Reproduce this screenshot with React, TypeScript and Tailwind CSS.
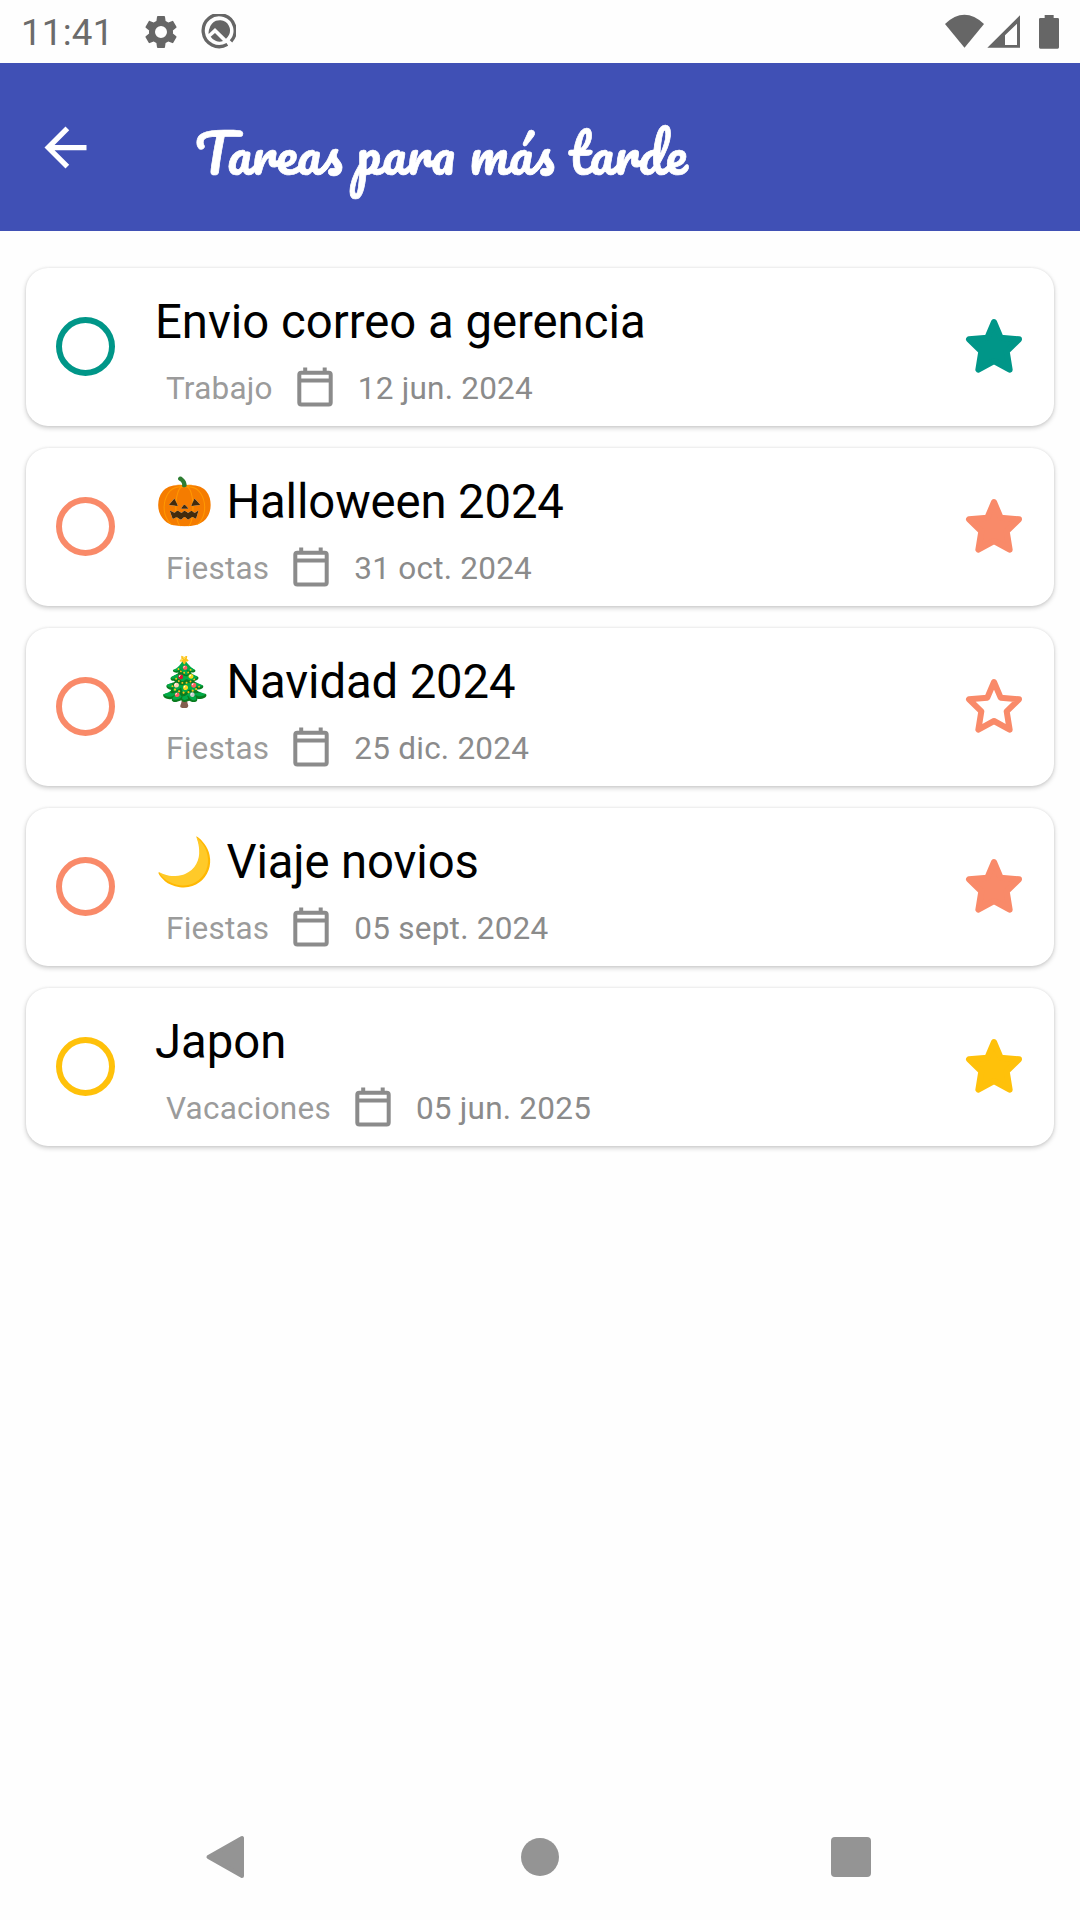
import React from "react";

type Task = {
  emoji?: string;
  title: string;
  category: string;
  date: string;
  starred: boolean;
  ring: string;
  star: string;
};

const tasks: Task[] = [
  { title: "Envio correo a gerencia", category: "Trabajo", date: "12 jun. 2024", starred: true, ring: "border-[#009688]", star: "text-[#009688]" },
  { emoji: "🎃", title: "Halloween 2024", category: "Fiestas", date: "31 oct. 2024", starred: true, ring: "border-[#f98a69]", star: "text-[#f98a69]" },
  { emoji: "🎄", title: "Navidad 2024", category: "Fiestas", date: "25 dic. 2024", starred: false, ring: "border-[#f98a69]", star: "text-[#f98a69]" },
  { emoji: "🌙", title: "Viaje novios", category: "Fiestas", date: "05 sept. 2024", starred: true, ring: "border-[#f98a69]", star: "text-[#f98a69]" },
  { title: "Japon", category: "Vacaciones", date: "05 jun. 2025", starred: true, ring: "border-[#ffc10a]", star: "text-[#ffc10a]" },
];

function StarIcon({ filled }: { filled: boolean }) {
  return (
    <svg viewBox="190 198 186 180" className="h-[60px] w-[62px]" fill={filled ? "currentColor" : "none"} stroke="currentColor" strokeWidth="18" strokeLinejoin="round">
      <path d="M283 216L303 263L358 268L321 304L330 359L283 333L236 359L245 304L208 268L263 263Z" />
    </svg>
  );
}

function CalendarIcon() {
  return (
    <svg viewBox="0 0 36 40" className="mb-[3px] h-10 w-9 shrink-0" fill="none" stroke="#8b8b8b" strokeWidth="4">
      <rect x="2.3" y="5.8" width="31.4" height="31.6" rx="2" />
      <path d="M2 13.6H34M8.2 0.5V6M27.7 0.5V6" />
    </svg>
  );
}

function StatusBar() {
  return (
    <header className="flex h-[63px] items-center text-[#666]">
      <span className="ml-[21px] w-[90px] pt-1 font-['Roboto'] text-[36.75px] leading-none tracking-[0.2px] text-[#6b6b6b]">11:41</span>
      <svg viewBox="0 0 24 24" className="ml-[30px] size-[40px]" fill="currentColor">
        <path d="M19.14 12.94c.04-.3.06-.61.06-.94 0-.32-.02-.64-.07-.94l2.03-1.58a.49.49 0 0 0 .12-.61l-1.92-3.32a.488.488 0 0 0-.59-.22l-2.39.96c-.5-.38-1.03-.7-1.62-.94l-.36-2.54a.484.484 0 0 0-.48-.41h-3.84c-.24 0-.43.17-.47.41l-.36 2.54c-.59.24-1.13.57-1.62.94l-2.39-.96c-.22-.08-.47 0-.59.22L2.74 8.87c-.12.21-.08.47.12.61l2.03 1.58c-.05.3-.09.63-.09.94s.02.64.07.94l-2.03 1.58a.49.49 0 0 0-.12.61l1.92 3.32c.12.22.37.29.59.22l2.39-.96c.5.38 1.03.7 1.62.94l.36 2.54c.05.24.24.41.48.41h3.84c.24 0 .44-.17.47-.41l.36-2.54c.59-.24 1.13-.56 1.62-.94l2.39.96c.22.08.47 0 .59-.22l1.92-3.32c.12-.22.07-.47-.12-.61l-2.01-1.58zM12 15.6A3.6 3.6 0 1 1 12 8.4a3.6 3.6 0 0 1 0 7.2z" />
      </svg>
      <svg viewBox="0 0 108 108" className="ml-[19px] size-[36px]" fill="none" stroke="currentColor">
        <path d="M82 91A48 48 0 1 1 93 82" strokeWidth="10" />
        <path d="M29 42A31 31 0 1 1 78 74L45 42L26 60A31 31 0 0 1 29 42Z" fill="currentColor" stroke="none" />
        <path d="M32 68L45 57L69 81A31 31 0 0 1 32 68Z" fill="currentColor" stroke="none" />
      </svg>
      <svg viewBox="0 0 345 105" className="mr-[20px] ml-auto h-[35px] w-[115px]" fill="currentColor">
        <path d="M0 30Q58 -25 117 30L58.500 101Z" />
        <path fillRule="evenodd" d="M127 101L225 4V101ZM180 93H216V29L180 64Z" />
        <path d="M299 3h27v9h12q4 0 4 4v84q0 4-4 4h-52q-4 0-4-4V16q0-4 4-4h13Z" />
      </svg>
    </header>
  );
}

function AppBar() {
  return (
    <div className="flex h-[168px] items-center bg-[#4050b5] text-white">
      <svg viewBox="0 0 24 24" className="ml-[34px] size-[63px]" fill="currentColor">
        <path d="M20 11H7.830l5.590-5.590L12 4l-8 8 8 8 1.410-1.410L7.830 13H20z" />
      </svg>
      <h1 className="ml-[98px] pt-2.5 font-['Pacifico',cursive] text-[53px] leading-none font-normal whitespace-nowrap [-webkit-text-stroke:0.7px_white]">
        Tareas para más tarde
      </h1>
    </div>
  );
}

function TaskCard({ task }: { task: Task }) {
  return (
    <li className="flex h-[158px] items-center rounded-[22px] bg-white pr-[29px] pb-[2px] pl-[30px] shadow-[0_2px_5px_rgba(0,0,0,0.2),0_0_3px_rgba(0,0,0,0.08)]">
      <span className={`size-[59px] shrink-0 rounded-full border-[6px] ${task.ring}`} />
      <div className="ml-[40px] flex-1 pt-[19px] font-['Roboto']">
        <h2 className="flex h-[66px] items-center text-[47.25px] leading-none whitespace-pre text-black">
          {task.emoji && <span className="mr-px font-['Noto_Color_Emoji']">{task.emoji}</span>}
          <span className={task.emoji ? "tracking-[-0.12px]" : ""}>{task.emoji ? " " : ""}{task.title}</span>
        </h2>
        <div className="ml-[11px] flex h-[65px] items-center text-[31.5px] leading-none tracking-[0.23px]">
          <span className="text-[#9b9b9b]">{task.category}</span>
          <span className="ml-6 flex items-center gap-[25px] text-[#8b8b8b]">
            <CalendarIcon />
            {task.date}
          </span>
        </div>
      </div>
      <span className={task.star}>
        <StarIcon filled={task.starred} />
      </span>
    </li>
  );
}

function NavBar() {
  return (
    <nav className="flex h-[126px] items-center justify-between pr-[209px] pl-[205px] text-[#949494]">
      <svg viewBox="0 0 40 44" className="h-11 w-10" fill="currentColor" stroke="currentColor" strokeWidth="4" strokeLinejoin="round">
        <path d="M3.500 22L37 3V41Z" />
      </svg>
      <span className="ml-1 size-[38px] rounded-full bg-[#949494]" />
      <span className="size-10 rounded-[4px] bg-[#949494]" />
    </nav>
  );
}

export default function App() {
  return (
    <div className="flex h-[1920px] w-[1080px] flex-col bg-[#fefefe]">
      <StatusBar />
      <AppBar />
      <ul className="flex flex-1 flex-col gap-[22px] px-[26px] pt-[37px]">
        {tasks.map((task) => (
          <TaskCard key={task.title} task={task} />
        ))}
      </ul>
      <NavBar />
    </div>
  );
}
